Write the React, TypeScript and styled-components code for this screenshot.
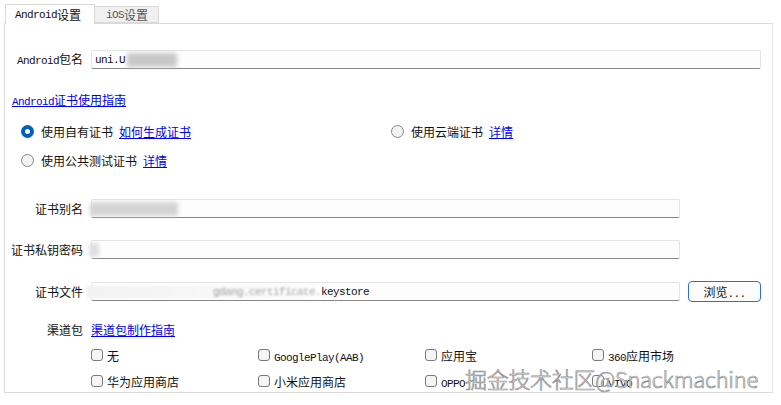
import React from "react";
import styled, { createGlobalStyle } from "styled-components";

// ── Global ───────────────────────────────────────────────────────

const GlobalStyle = createGlobalStyle`
  html, body {
    margin: 0;
    padding: 0;
    background: #fff;
  }
  body {
    font-family: "Noto Sans CJK SC", "Liberation Sans", sans-serif;
    font-size: 12px;
    color: #111;
  }
`;

// ── Styled ───────────────────────────────────────────────────────

const Page = styled.div`
  position: relative;
  width: 781px;
  height: 405px;
  padding: 4px 0 0 4px;
  box-sizing: border-box;
  overflow: hidden;
`;

const TabBar = styled.div`
  display: flex;
  align-items: flex-end;
  height: 19px;
  padding-left: 1px;
`;

const Tab = styled.div<{ $active?: boolean }>`
  position: relative;
  z-index: 1;
  box-sizing: border-box;
  display: flex;
  align-items: center;
  height: ${({ $active }) => ($active ? 20 : 17)}px;
  margin-bottom: ${({ $active }) => ($active ? -1 : 0)}px;
  width: ${({ $active }) => ($active ? 90 : 64)}px;
  padding-left: ${({ $active }) => ($active ? 9 : 11)}px;
  border: 1px solid #d9d9d9;
  border-bottom: ${({ $active }) => ($active ? "none" : "1px solid #d9d9d9")};
  border-left: ${({ $active }) => ($active ? "1px solid #d9d9d9" : "none")};
  background: ${({ $active }) => ($active ? "#fff" : "#f0f0f0")};
  color: ${({ $active }) => ($active ? "#111" : "#555")};
  white-space: nowrap;
`;

const Panel = styled.div`
  box-sizing: border-box;
  width: 769px;
  height: 370px;
  border: 1px solid #dadada;
  border-right-color: #e6e6e6;
  display: flex;
  flex-direction: column;
`;

const Lat = styled.span`
  font-family: "Liberation Mono", monospace;
  font-size: 11px;
  letter-spacing: -0.6px;
`;

const FormGrid = styled.div<{ $top: number; $gap?: number }>`
  display: grid;
  grid-template-columns: 78px 589px 73px;
  column-gap: 8px;
  row-gap: ${({ $gap }) => $gap ?? 0}px;
  align-items: center;
  margin-top: ${({ $top }) => $top}px;
`;

const Label = styled.div`
  grid-column: 1;
  text-align: right;
  white-space: nowrap;
  line-height: 16px;
`;

const Field = styled.div<{ $wide?: boolean }>`
  box-sizing: border-box;
  grid-column: ${({ $wide }) => ($wide ? "2 / 4" : "2")};
  display: flex;
  align-items: center;
  height: 19px;
  padding-left: 3px;
  border: 1px solid #e4e4e4;
  border-bottom-color: #878787;
  border-radius: 2px;
  background: #fdfdfd;
  white-space: nowrap;
`;

const Smudge = styled.span<{ $w: number; $h?: number; $shade?: string; $shift?: number }>`
  display: inline-block;
  width: ${({ $w }) => $w}px;
  height: ${({ $h }) => $h ?? 14}px;
  margin-left: ${({ $shift }) => $shift ?? 0}px;
  background: ${({ $shade }) => $shade ?? "#c8c8c8"};
  filter: blur(2px);
  border-radius: 3px;
`;

const HazyText = styled.span`
  display: inline-flex;
  justify-content: flex-end;
  width: 234px;
  margin-left: -8px;
  color: #a0a0a0;
  filter: blur(1.2px);
  background: linear-gradient(90deg, #f2f2f2, #f8f8f8 60%, #fff);
`;

const Browse = styled.button`
  box-sizing: border-box;
  grid-column: 3;
  height: 21px;
  border: 1px solid #2b73c0;
  border-radius: 4px;
  background: #fcfcfc;
  font-family: "Noto Sans CJK SC", sans-serif;
  font-size: 12px;
  color: #111;
  padding: 0;
`;

const GuideLink = styled.a`
  margin: 23px 0 0 7px;
  line-height: 16px;
  color: #0000ee;
  text-decoration: underline;
  align-self: flex-start;
`;

const Link = styled.a<{ $col?: number }>`
  grid-column: ${({ $col }) => $col ?? "auto"};
  justify-self: start;
  color: #0000ee;
  text-decoration: underline;
  white-space: nowrap;
`;

const RadioGrid = styled.div`
  display: grid;
  grid-template-columns: 370px 1fr;
  grid-auto-rows: 20px;
  row-gap: 9px;
  margin-top: 11px;
  padding-left: 16px;
`;

const Option = styled.label<{ $gap?: number }>`
  display: flex;
  align-items: center;
  gap: ${({ $gap }) => $gap ?? 6}px;
  white-space: nowrap;
`;

const RadioDot = styled.span<{ $checked?: boolean }>`
  box-sizing: border-box;
  width: 13px;
  height: 13px;
  border-radius: 50%;
  flex-shrink: 0;
  background: ${({ $checked }) => ($checked ? "#fff" : "#f3f3f3")};
  border: ${({ $checked }) => ($checked ? "4px solid #005fb8" : "1px solid #858585")};
  margin-right: 1px;
`;

const Tail = styled.span`
  margin-left: -1px;
`;

const ChannelGrid = styled.div`
  display: grid;
  grid-template-columns: repeat(4, 167px);
  grid-auto-rows: 20px;
  row-gap: 6px;
  margin-top: 7px;
  padding-left: 86px;
`;

const CheckBox = styled.span`
  box-sizing: border-box;
  width: 12px;
  height: 12px;
  flex-shrink: 0;
  border: 1px solid #7b7b7b;
  border-radius: 3px;
  background: #f5f5f5;
`;

const Watermark = styled.div`
  position: absolute;
  left: 465px;
  top: 362px;
  font-family: "Noto Sans CJK SC", "Noto Sans", sans-serif;
  font-size: 22px;
  font-weight: 300;
  letter-spacing: -0.3px;
  color: rgba(255, 255, 255, 0.92);
  -webkit-text-stroke: 0.7px #8e8e8e;
  white-space: nowrap;
  pointer-events: none;
`;

// ── Data ─────────────────────────────────────────────────────────

const CHANNELS: React.ReactNode[] = [
  "无",
  <Lat key="gp">GooglePlay(AAB)</Lat>,
  "应用宝",
  <>
    <Lat>360</Lat>应用市场
  </>,
  "华为应用商店",
  "小米应用商店",
  <Lat key="oppo">OPPO</Lat>,
  <Lat key="vivo">VIVO</Lat>,
];

// ── Component ────────────────────────────────────────────────────

export default function App() {
  return (
    <>
      <GlobalStyle />
      <Page>
        <TabBar>
          <Tab $active>
            <Lat>Android</Lat>设置
          </Tab>
          <Tab>
            <Lat>iOS</Lat>设置
          </Tab>
        </TabBar>

        <Panel>
          <FormGrid $top={26}>
            <Label>
              <Lat>Android</Lat>包名
            </Label>
            <Field $wide>
              <Lat>uni.U</Lat>
              <Smudge $w={50} $shift={2} />
            </Field>
          </FormGrid>

          <GuideLink href="#">
            <Lat>Android</Lat>证书使用指南
          </GuideLink>

          <RadioGrid>
            <Option>
              <RadioDot $checked />
              使用自有证书
              <Link href="#">如何生成证书</Link>
            </Option>
            <Option>
              <RadioDot />
              使用云端证书
              <Link href="#">详情</Link>
            </Option>
            <Option>
              <RadioDot />
              使用公共测试证书
              <Link href="#">详情</Link>
            </Option>
          </RadioGrid>

          <FormGrid $top={29} $gap={22}>
            <Label>证书别名</Label>
            <Field>
              <Smudge $w={88} $shade="#d4d4d4" $shift={-5} />
            </Field>
            <Label>证书私钥密码</Label>
            <Field>
              <Smudge $w={10} $shade="#dedede" $shift={-6} />
            </Field>
            <Label>证书文件</Label>
            <Field>
              <HazyText>
                <Lat>gdang.certificate.</Lat>
              </HazyText>
              <Lat>keystore</Lat>
            </Field>
            <Browse type="button">
              浏览<Lat>...</Lat>
            </Browse>
          </FormGrid>

          <FormGrid $top={19}>
            <Label>渠道包</Label>
            <Link href="#" $col={2}>
              渠道包制作指南
            </Link>
          </FormGrid>

          <ChannelGrid>
            {CHANNELS.map((name, i) => (
              <Option key={i} $gap={5}>
                <CheckBox />
                <Tail>{name}</Tail>
              </Option>
            ))}
          </ChannelGrid>
        </Panel>

        <Watermark>掘金技术社区@Snackmachine</Watermark>
      </Page>
    </>
  );
}
